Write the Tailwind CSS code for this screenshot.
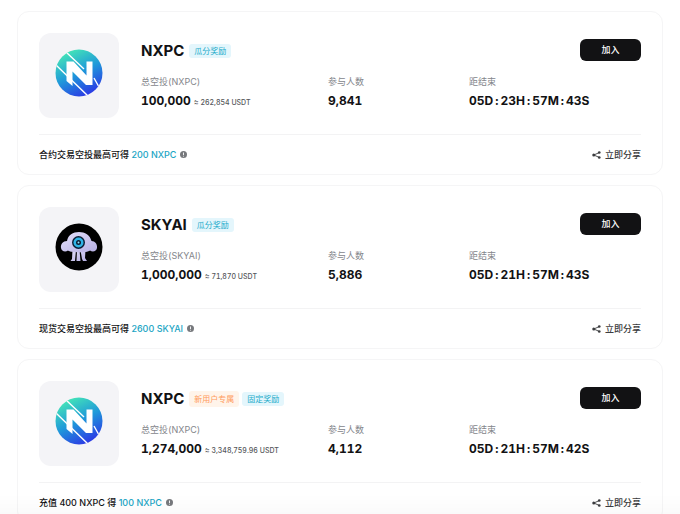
<!DOCTYPE html>
<html lang="zh-CN">
<head>
    <meta charset="UTF-8">
    <meta name="viewport" content="width=device-width, initial-scale=1.0">
    <title>空投活动</title>
    <script src="https://cdn.jsdelivr.net/npm/@tailwindcss/browser@4"></script>
    <style>
        body {
            font-family: 'Inter', 'Noto Sans CJK SC', sans-serif;
        }
    </style>
</head>
<body class="bg-white text-[#121214]">
    <!-- Shared icons -->
    <svg class="absolute w-0 h-0" aria-hidden="true">
        <defs>
            <linearGradient id="nxpcFill" x1="0.25" y1="0" x2="0.75" y2="1">
                <stop offset="0" stop-color="#47ecb4"/>
                <stop offset="0.5" stop-color="#1f98da"/>
                <stop offset="1" stop-color="#2d2de6"/>
            </linearGradient>
            <linearGradient id="skyFill" x1="0" y1="0" x2="1" y2="1">
                <stop offset="0" stop-color="#e4e0fb"/>
                <stop offset="1" stop-color="#b5aee2"/>
            </linearGradient>
            <clipPath id="coinClip"><circle cx="24" cy="24" r="23.5"/></clipPath>
            <symbol id="nxpc" viewBox="0 0 48 48">
                <g clip-path="url(#coinClip)">
                    <rect width="48" height="48" fill="url(#nxpcFill)"/>
                    <path d="M11 3 L29 20 M1 16 L34 48 M39 29 L44 38" stroke="#fff" stroke-width="1.4" fill="none"/>
                    <path d="M11.5 32 V12.5 H18.5 L31.500 26.5 V12.500 H37.500 V36 H31 L17.500 22.5 V37 Z" fill="#fff"/>
                </g>
            </symbol>
            <symbol id="skyai" viewBox="0 0 48 48">
                <circle cx="24" cy="24" r="23.500" fill="#000"/>
                <path d="M17.500 27 L17 36 L15.500 38 H20 L21 27 Z M22 27 L21.500 38 H25.500 L24.500 27 Z M25.500 27 L27 36 L28 38 H32 L30 35 L30.500 27 Z" fill="url(#skyFill)"/>
                <path d="M12 18 C13 12 18 9 24 9 C30 9 35 12 36.500 18 C40 18 42.500 21 42 25 C41.500 28 38 29.500 35 27.500 C32 30 16 30 13 27.500 C10 29.500 6.500 28 6 25 C5.500 21 8 18 12 18 Z" fill="url(#skyFill)"/>
                <circle cx="23.500" cy="19.500" r="6.500" fill="#0b1c33"/>
                <circle cx="23.500" cy="19.500" r="5" fill="#2fb4e6"/>
                <circle cx="23.500" cy="19.500" r="2.500" fill="#0b1c33"/>
                <circle cx="23.500" cy="19.500" r="1" fill="#8fe3ff"/>
            </symbol>
            <symbol id="info" viewBox="0 0 14 14">
                <circle cx="7" cy="7" r="7" fill="#77797d"/>
                <path d="M7 3 V8 M7 9.500 V11.200" stroke="#fff" stroke-width="1.800"/>
            </symbol>
            <symbol id="share" viewBox="0 0 18 16">
                <path d="M15 3 L3.500 8 L15 13" fill="none" stroke="#3c3d40" stroke-width="1.800"/>
                <circle cx="3.500" cy="8" r="3" fill="#3c3d40"/>
                <circle cx="14.500" cy="3" r="2.700" fill="#3c3d40"/>
                <circle cx="14.500" cy="13" r="2.700" fill="#3c3d40"/>
            </symbol>
        </defs>
    </svg>

    <main class="h-screen overflow-hidden flex flex-col gap-[10px] pt-[11px] px-[17px]">
        <!-- NXPC, futures -->
        <article class="shrink-0 border border-[#f5f5f6] rounded-xl px-[21px] pt-[21px]">
            <div class="flex gap-[22px] pb-4 border-b border-[#f3f3f4]">
                <div class="w-20 h-[85px] shrink-0 rounded-xl bg-[#f4f4f7] flex justify-center pt-4">
                    <svg class="w-12 h-12"><use href="#nxpc"/></svg>
                </div>
                <div class="flex-1 pt-[6px]">
                    <div class="flex items-end justify-between h-[22px]">
                        <div class="flex items-center gap-[5px]">
                            <h2 class="text-[15px] leading-5 font-bold">NXPC</h2>
                            <span class="h-[14px] px-[5px] rounded-[3px] bg-[#e4f6fc] text-[#1eaccb] text-[8px] leading-[14px]">瓜分奖励</span>
                        </div>
                        <button class="w-[61px] h-[22px] rounded-md bg-[#121214] text-white text-[9px] font-medium">加入</button>
                    </div>
                    <dl class="grid grid-cols-[187fr_141fr_172fr] pt-[14px] tabular-nums">
                        <div>
                            <dt class="text-[9px] leading-[14px] text-[#84868b]">总空投(NXPC)</dt>
                            <dd class="pt-1 text-[12px] leading-4 font-bold whitespace-nowrap">100,000 <span class="text-[7px] font-medium text-[#55575b]">≈ 262,854 USDT</span></dd>
                        </div>
                        <div>
                            <dt class="text-[9px] leading-[14px] text-[#84868b]">参与人数</dt>
                            <dd class="pt-1 text-[12px] leading-4 font-bold">9,841</dd>
                        </div>
                        <div>
                            <dt class="text-[9px] leading-[14px] text-[#84868b]">距结束</dt>
                            <dd class="pt-1 flex gap-[2px] text-[12px] leading-4 font-bold"><span>05D</span><span>:</span><span>23H</span><span>:</span><span>57M</span><span>:</span><span>43S</span></dd>
                        </div>
                    </dl>
                </div>
            </div>
            <div class="flex items-center justify-between h-[39px] text-[9px]">
                <p class="flex items-center gap-1 font-medium">
                    <span>合约交易空投最高可得 <a href="#" class="text-[#1ba5c4]">200 NXPC</a></span>
                    <svg class="w-[7px] h-[7px]"><use href="#info"/></svg>
                </p>
                <button class="flex items-center gap-1 font-medium text-[#3c3d40]">
                    <svg class="w-[9px] h-2"><use href="#share"/></svg>
                    立即分享
                </button>
            </div>
        </article>

        <!-- SKYAI, spot -->
        <article class="shrink-0 border border-[#f5f5f6] rounded-xl px-[21px] pt-[21px]">
            <div class="flex gap-[22px] pb-4 border-b border-[#f3f3f4]">
                <div class="w-20 h-[85px] shrink-0 rounded-xl bg-[#f4f4f7] flex justify-center pt-4">
                    <svg class="w-12 h-12"><use href="#skyai"/></svg>
                </div>
                <div class="flex-1 pt-[6px]">
                    <div class="flex items-end justify-between h-[22px]">
                        <div class="flex items-center gap-[5px]">
                            <h2 class="text-[15px] leading-5 font-bold">SKYAI</h2>
                            <span class="h-[14px] px-[5px] rounded-[3px] bg-[#e4f6fc] text-[#1eaccb] text-[8px] leading-[14px]">瓜分奖励</span>
                        </div>
                        <button class="w-[61px] h-[22px] rounded-md bg-[#121214] text-white text-[9px] font-medium">加入</button>
                    </div>
                    <dl class="grid grid-cols-[187fr_141fr_172fr] pt-[14px] tabular-nums">
                        <div>
                            <dt class="text-[9px] leading-[14px] text-[#84868b]">总空投(SKYAI)</dt>
                            <dd class="pt-1 text-[12px] leading-4 font-bold whitespace-nowrap">1,000,000 <span class="text-[7px] font-medium text-[#55575b]">≈ 71,870 USDT</span></dd>
                        </div>
                        <div>
                            <dt class="text-[9px] leading-[14px] text-[#84868b]">参与人数</dt>
                            <dd class="pt-1 text-[12px] leading-4 font-bold">5,886</dd>
                        </div>
                        <div>
                            <dt class="text-[9px] leading-[14px] text-[#84868b]">距结束</dt>
                            <dd class="pt-1 flex gap-[2px] text-[12px] leading-4 font-bold"><span>05D</span><span>:</span><span>21H</span><span>:</span><span>57M</span><span>:</span><span>43S</span></dd>
                        </div>
                    </dl>
                </div>
            </div>
            <div class="flex items-center justify-between h-[39px] text-[9px]">
                <p class="flex items-center gap-1 font-medium">
                    <span>现货交易空投最高可得 <a href="#" class="text-[#1ba5c4]">2600 SKYAI</a></span>
                    <svg class="w-[7px] h-[7px]"><use href="#info"/></svg>
                </p>
                <button class="flex items-center gap-1 font-medium text-[#3c3d40]">
                    <svg class="w-[9px] h-2"><use href="#share"/></svg>
                    立即分享
                </button>
            </div>
        </article>

        <!-- NXPC, new users -->
        <article class="shrink-0 border border-[#f5f5f6] rounded-xl px-[21px] pt-[21px]">
            <div class="flex gap-[22px] pb-4 border-b border-[#f3f3f4]">
                <div class="w-20 h-[85px] shrink-0 rounded-xl bg-[#f4f4f7] flex justify-center pt-4">
                    <svg class="w-12 h-12"><use href="#nxpc"/></svg>
                </div>
                <div class="flex-1 pt-[6px]">
                    <div class="flex items-end justify-between h-[22px]">
                        <div class="flex items-center gap-[5px]">
                            <h2 class="text-[15px] leading-5 font-bold">NXPC</h2>
                            <div class="flex items-center gap-[3px]">
                                <span class="h-4 px-[5px] rounded-[3px] bg-[#fff4ea] text-[#ff9a5c] text-[8px] leading-4">新用户专属</span>
                                <span class="h-[14px] px-[5px] rounded-[3px] bg-[#e4f6fc] text-[#1eaccb] text-[8px] leading-[14px]">固定奖励</span>
                            </div>
                        </div>
                        <button class="w-[61px] h-[22px] rounded-md bg-[#121214] text-white text-[9px] font-medium">加入</button>
                    </div>
                    <dl class="grid grid-cols-[187fr_141fr_172fr] pt-[14px] tabular-nums">
                        <div>
                            <dt class="text-[9px] leading-[14px] text-[#84868b]">总空投(NXPC)</dt>
                            <dd class="pt-1 text-[12px] leading-4 font-bold whitespace-nowrap">1,274,000 <span class="text-[7px] font-medium text-[#55575b]">≈ 3,348,759.96 USDT</span></dd>
                        </div>
                        <div>
                            <dt class="text-[9px] leading-[14px] text-[#84868b]">参与人数</dt>
                            <dd class="pt-1 text-[12px] leading-4 font-bold">4,112</dd>
                        </div>
                        <div>
                            <dt class="text-[9px] leading-[14px] text-[#84868b]">距结束</dt>
                            <dd class="pt-1 flex gap-[2px] text-[12px] leading-4 font-bold"><span>05D</span><span>:</span><span>21H</span><span>:</span><span>57M</span><span>:</span><span>42S</span></dd>
                        </div>
                    </dl>
                </div>
            </div>
            <div class="flex items-center justify-between h-[39px] text-[9px]">
                <p class="flex items-center gap-1 font-medium">
                    <span>充值 400 NXPC 得 <a href="#" class="text-[#1ba5c4]">100 NXPC</a></span>
                    <svg class="w-[7px] h-[7px]"><use href="#info"/></svg>
                </p>
                <button class="flex items-center gap-1 font-medium text-[#3c3d40]">
                    <svg class="w-[9px] h-2"><use href="#share"/></svg>
                    立即分享
                </button>
            </div>
        </article>
    </main>

    <!-- Bottom fade -->
    <div class="fixed inset-x-0 bottom-0 h-5 pointer-events-none bg-linear-to-b from-black/0 to-black/2"></div>
</body>
</html>
